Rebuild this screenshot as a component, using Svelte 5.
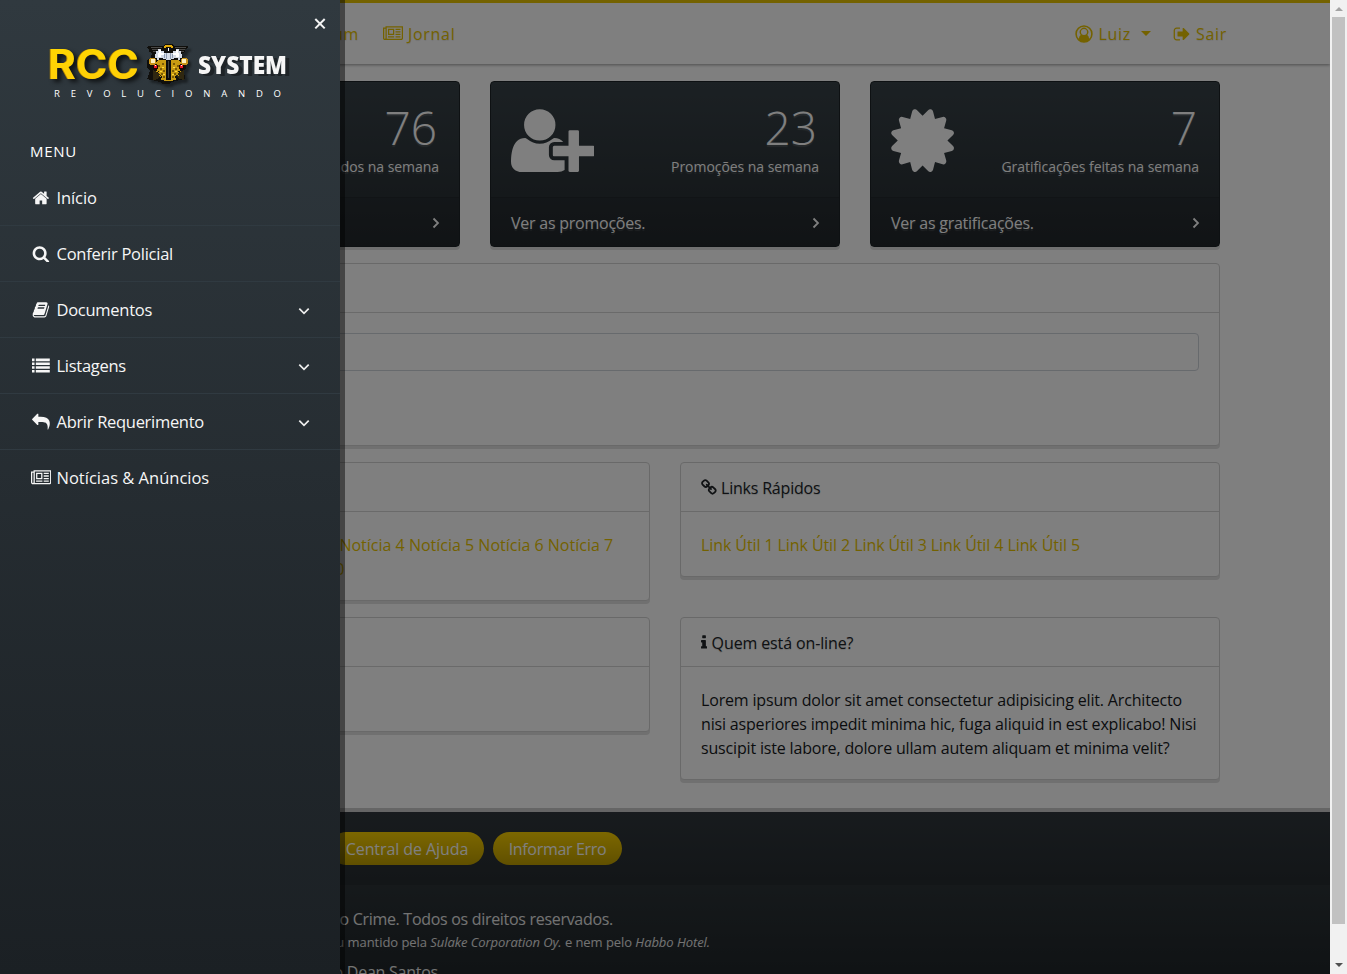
<script>
  const P = {
    home: 'M1472 992v480q0 26-19 45t-45 19h-384v-384h-256v384h-384q-26 0-45-19t-19-45v-480q0-1 .5-3t.5-3l575-474 575 474q1 2 1 6zm223-69l-62 74q-8 9-21 11h-3q-13 0-21-7l-692-577-692 577q-12 8-24 7-13-2-21-11l-62-74q-8-10-7-23.5t11-21.5l719-599q32-26 76-26t76 26l244 204v-195q0-14 9-23t23-9h192q14 0 23 9t9 23v408l219 182q10 8 11 21.5t-7 23.5z',
    search: 'M1216 832q0-185-131.5-316.5t-316.5-131.5-316.5 131.5-131.5 316.5 131.5 316.5 316.5 131.5 316.5-131.5 131.5-316.5zm512 832q0 52-38 90t-90 38q-54 0-90-38l-343-342q-179 124-399 124-143 0-273.5-55.5t-225-150-150-225-55.5-273.5 55.5-273.5 150-225 225-150 273.5-55.5 273.5 55.5 225 150 150 225 55.5 273.5q0 220-124 399l343 343q37 37 37 90z',
    book: 'M1703 478q40 57 18 129l-275 906q-19 64-76.5 107.5t-122.5 43.5h-923q-77 0-148.5-53.5t-99.5-131.5q-24-67-2-127 0-4 3-27t4-37q1-8-3-21.5t-3-19.5q2-11 8-21t16.5-23.5 16.5-23.5q23-38 45-91.5t30-91.5q3-10 .5-30t-.5-28q3-11 17-28t17-23q21-36 42-92t25-90q1-9-2.5-32t.5-28q4-13 22-30.5t22-22.5q19-26 42.5-84.5t27.5-96.5q1-8-3-25.5t-2-26.5q2-8 9-18t18-23 17-21q8-12 16.5-30.5t15-35 16-36 19.5-32 26.5-23.5 36-11.5 47.5 5.5l-1 3q38-9 51-9h761q74 0 114 56t18 130l-274 906q-36 119-71.5 153.5t-128.5 34.5h-869q-27 0-38 15-11 16-1 43 24 70 144 70h923q29 0 56-15.5t35-41.5l300-987q7-22 5-57 38 15 59 43zm-1064 2q-4 13 2 22.5t20 9.5h608q13 0 25.5-9.5t16.5-22.5l21-64q4-13-2-22.5t-20-9.5h-608q-13 0-25.5 9.5t-16.5 22.5zm-83 256q-4 13 2 22.5t20 9.5h608q13 0 25.5-9.5t16.5-22.5l21-64q4-13-2-22.5t-20-9.5h-608q-13 0-25.5 9.5t-16.5 22.5z',
    list: 'M0 160h256v256h-256zM384 160h1408v256h-1408zM0 544h256v256h-256zM384 544h1408v256h-1408zM0 928h256v256h-256zM384 928h1408v256h-1408zM0 1312h256v256h-256zM384 1312h1408v256h-1408z',
    reply: 'M0 640q0 26 19 45l512 512q19 19 45 19t45-19 19-45v-256h224q98 0 175.5 6t154 21.5 133 42.5 105.5 69.5 80 101 48.5 138.5 17.5 181q0 55-5 123 0 6-2.5 23.5t-2.5 26.5q0 15 8.5 25t23.5 10q16 0 28-17 7-9 13-22t13.5-30 10.5-24q127-285 127-451 0-199-53-333-162-403-875-403h-224v-256q0-26-19-45t-45-19-45 19l-512 512q-19 19-19 45z',
    news: 'M1024 512h-384v384h384v-384zm128 640v128h-640v-128h640zm0-768v640h-640v-640h640zm640 768v128h-512v-128h512zm0-256v128h-512v-128h512zm0-256v128h-512v-128h512zm0-256v128h-512v-128h512zm-1536 960v-960h-128v960q0 26 19 45t45 19 45-19 19-45zm1664 0v-1088h-1536v1088q0 33-11 64h1483q26 0 45-19t19-45zm128-1216v1216q0 80-56 136t-136 56h-1664q-80 0-136-56t-56-136v-1088h256v-128h1792z',
    out: 'M704 1440q0 4 1 20t.5 26.5-3 23.5-10 19.5-20.5 6.5h-320q-119 0-203.5-84.5t-84.5-203.5v-704q0-119 84.5-203.5t203.5-84.5h320q13 0 22.5 9.5t9.5 22.5q0 4 1 20t.5 26.5-3 23.5-10 19.5-20.5 6.5h-320q-66 0-113 47t-47 113v704q0 66 47 113t113 47h312l11.5 1 11.5 3 8 5.5 7 9 2 13.5zm928-544q0 26-19 45l-544 544q-19 19-45 19t-45-19-19-45v-288h-448q-26 0-45-19t-19-45v-384q0-26 19-45t45-19h448v-288q0-26 19-45t45-19 45 19l544 544q19 19 19 45z',
    seal: 'M1504 896l138 135q30 28 20 70-12 41-52 51l-188 48 53 186q12 41-19 70-29 31-70 19l-186-53-48 188q-10 40-51 52-12 2-19 2-31 0-51-22l-135-138-135 138q-28 30-70 20-41-11-51-52l-48-188-186 53q-41 12-70-19-31-29-19-70l53-186-188-48q-40-10-52-51-10-42 20-70l138-135-138-135q-30-28-20-70 12-41 52-51l188-48-53-186q-12-41 19-70 29-31 70-19l186 53 48-188q10-41 51-51 41-12 70 19l135 139 135-139q29-30 70-19 41 10 51 51l48 188 186-53q41-12 70 19 31 29 19 70l-53 186 188 48q40 10 52 51 10 42-20 70z',
    plus: 'M704 896q-159 0-271.5-112.5t-112.5-271.5 112.5-271.5 271.5-112.5 271.5 112.5 112.5 271.5-112.5 271.5-271.5 112.5zm960 128h352q13 0 22.5 9.5t9.5 22.5v192q0 13-9.5 22.5t-22.5 9.5h-352v352q0 13-9.5 22.5t-22.5 9.5h-192q-13 0-22.5-9.5t-9.5-22.5v-352h-352q-13 0-22.5-9.5t-9.5-22.5v-192q0-13 9.5-22.5t22.5-9.5h352v-352q0-13 9.5-22.5t22.5-9.5h192q13 0 22.5 9.5t9.5 22.5v352zm-736 224q0 52 38 90t90 38h256v238q-68 50-171 50h-874q-121 0-194-69t-73-190q0-53 3.5-103.5t14-109 26.5-108.5 43-97.5 62-81 85.5-53.5 111.5-20q19 0 39 17 79 61 154.5 91.5t164.5 30.5 164.5-30.5 154.5-91.5q20-17 39-17 132 0 217 96h-223q-52 0-90 38t-38 90v192z',
    link: 'M1456 1216q0-40-28-68l-208-208q-28-28-68-28-42 0-72 32 3 3 19 18.5t21.5 21.5 15 19 13 25.5 3.5 27.5q0 40-28 68t-68 28q-15 0-27.5-3.5t-25.5-13-19-15-21.5-21.5-18.5-19q-33 31-33 73 0 40 28 68l206 207q27 27 68 27 40 0 68-26l147-146q28-28 28-67zm-703-705q0-40-28-68l-206-207q-28-28-68-28-39 0-68 27l-147 146q-28 28-28 67 0 40 28 68l208 208q27 27 68 27 42 0 72-31-3-3-19-18.5t-21.5-21.5-15-19-13-25.5-3.5-27.5q0-40 28-68t68-28q15 0 27.5 3.5t25.5 13 19 15 21.5 21.5 18.5 19q33-31 33-73zm895 705q0 120-85 203l-147 146q-83 83-203 83-121 0-204-85l-206-207q-83-83-83-203 0-123 88-209l-88-88q-86 88-208 88-120 0-204-84l-208-208q-84-84-84-204t85-203l147-146q83-83 203-83 121 0 204 85l206 207q83 83 83 203 0 123-88 209l88 88q86-88 208-88 120 0 204 84l208 208q84 84 84 204z',
    info: 'M1216 1344v128q0 26-19 45t-45 19h-512q-26 0-45-19t-19-45v-128q0-26 19-45t45-19h64v-384h-64q-26 0-45-19t-19-45v-128q0-26 19-45t45-19h384q26 0 45 19t19 45v576h64q26 0 45 19t19 45zm-128-1152v192q0 26-19 45t-45 19h-256q-26 0-45-19t-19-45v-192q0-26 19-45t45-19h256q26 0 45 19t19 45z'
  };
  const menu = [
    { t: 'Início', i: 'home', s: -0.1 },
    { t: 'Conferir Policial', i: 'search', s: -0.25 },
    { t: 'Documentos', i: 'book', sub: true, s: -0.27 },
    { t: 'Listagens', i: 'list', sub: true, s: -0.27 },
    { t: 'Abrir Requerimento', i: 'reply', sub: true, s: -0.3 },
    { t: 'Notícias & Anúncios', i: 'news', s: 0 }
  ];
  const stats = [
    { n: '76', l: 'Alistados na semana', f: '', i: '' },
    { n: '23', l: 'Promoções na semana', f: 'Ver as promoções.', i: 'plus' },
    { n: '7', l: 'Gratificações feitas na semana', f: 'Ver as gratificações.', i: 'seal' }
  ];
  const news = Array.from({ length: 10 }, (_, k) => `Notícia ${k + 1}`);
  const links = Array.from({ length: 5 }, (_, k) => `Link Útil ${k + 1}`);
</script>

{#snippet icon(name, size, wide = false)}
  <svg class="ic" viewBox={wide ? '0 0 2048 1792' : name === 'info' ? '576 0 640 1792' : '0 0 1792 1792'} height={size} width={wide ? size * 8 / 7 : name === 'info' ? size * 0.36 : size}><path d={P[name]} fill="currentColor" /></svg>
{/snippet}

<div class="screen">
  <div class="page">
    <header>
      <nav class="left">
        <a class="forum">Fórum</a>
        <a class="jornal">{@render icon('news', 17.5, true)}<span>Jornal</span></a>
      </nav>
      <nav class="right">
        <a class="luiz">
          <svg class="ic" width="18" height="18" viewBox="0 0 18 18"><path fill-rule="evenodd" d="M9 .3a8.700 8.700 0 1 0 0 17.400a8.700 8.700 0 1 0 0-17.400zM3.800 13.700A7.100 7.100 0 1 1 14.200 13.700Q13.700 10.600 12.300 9.900A4.300 4.300 0 1 0 5.700 9.900Q4.300 10.600 3.800 13.700zM9 4.100a3 3 0 1 0 0 6a3 3 0 1 0 0-6z" fill="currentColor" /></svg>
          <span>Luiz</span><i class="caret"></i>
        </a>
        <a class="sair">{@render icon('out', 18)}<span>Sair</span></a>
      </nav>
    </header>

    <main>
      <section class="stats">
        {#each stats as s}
          <article class="stat">
            <div class="stat-top">
              <div class="big" class:seal={s.i === 'seal'}>{#if s.i}{@render icon(s.i, 73.200, s.i === 'plus')}{/if}</div>
              <div class="nums"><div class="num">{s.n}</div><div class="lab">{s.l}</div></div>
            </div>
            <div class="stat-foot"><span>{s.f}</span>
              <svg width="8" height="12" viewBox="0 0 8 12"><path d="M1.500 1.500L6 6L1.500 10.500" fill="none" stroke="currentColor" stroke-width="1.800" /></svg>
            </div>
          </article>
        {/each}
      </section>

      <section class="card wide"><div class="head"></div><div class="body form"><div class="field"></div></div></section>

      <section class="grid">
        <div class="card c1"><div class="head"></div><div class="body lnk">{#each news as n}<a>{n}</a>{' '}{/each}</div></div>
        <div class="card c2"><div class="head">{@render icon('link', 17)}<span>Links Rápidos</span></div><div class="body lnk links">{#each links as n}<a>{n}</a>{' '}{/each}</div></div>
        <div class="card c3"><div class="head"></div><div class="body"></div></div>
        <div class="card c4"><div class="head quem">{@render icon('info', 17)}<span>Quem está on-line?</span></div>
          <div class="body lorem">Lorem ipsum dolor sit amet consectetur adipisicing elit. Architecto<br />nisi asperiores impedit minima hic, fuga aliquid in est explicabo! Nisi<br />suscipit iste labore, dolore ullam autem aliquam et minima velit?</div></div>
      </section>
    </main>

    <footer>
      <div class="btns"><span class="btn b1">Central de Ajuda</span><span class="btn b2">Informar Erro</span></div>
      <div class="legal">
        <p class="l1">o Crime. Todos os direitos reservados.</p>
        <p class="l2">ou mantido pela <em>Sulake Corporation Oy.</em> e nem pelo <em>Habbo Hotel.</em></p>
        <p class="l3">o Dean Santos</p>
      </div>
    </footer>
    <div class="dim"></div>
  </div>

  <div class="scroll"><i class="up"></i><div class="thumb"></div><i class="down"></i></div>

  <aside>
    <div class="close"><svg width="12" height="12" viewBox="0 0 12 12"><path d="M1.300 1L10.700 10.400M10.700 1L1.300 10.400" stroke="#f4f4f4" stroke-width="2" /></svg></div>
    <svg class="logo" width="250" height="62" viewBox="45 40 250 62">
      <defs><linearGradient id="gold" x1="0" y1="0" x2="0" y2="1"><stop offset="0" stop-color="#ffd800" /><stop offset="1" stop-color="#ffcc08" /></linearGradient></defs>
      <g class="rcc">
        <text x="47" y="79" textLength="91" lengthAdjust="spacingAndGlyphs" fill="#b98a00">RCC</text>
        <text x="48" y="79" textLength="91" lengthAdjust="spacingAndGlyphs" fill="url(#gold)">RCC</text>
      </g>
      <g class="emblem" transform="translate(145 40)" shape-rendering="crispEdges">
        <path d="M4 6h14l2-2h7l2 2h14v2l-3 1v3l-3 1 1 5 3 2v8l-2 3 1 8-9 2-4 1-3 2h-6l-3-2-4-1-9-2 3-8-3-3v-8l4-2 1-5-3-1v-3l-3-1z" fill="#100f0c" />
        <path d="M6 7h11v1h-11zM7 9h7v1h-7zM8 11h4v1h-4zM30 7h11v1h-11zM33 9h7v1h-7zM35 11h4v1h-4z" fill="#4a4947" />
        <path d="M20 5h7v1h1v2h-2v-1h-5v1h-2v-2h1z" fill="#e0a90c" />
        <path d="M13 20h21l2 3-2 4 2 5-3-1 3 7-6-2 1 4-6 1h-3l-6-1 1-4-6 2 3-7-3 1 2-5-2-4z" fill="#c99b12" />
        <path d="M13 25h2v2h-2zM17 23h2v2h-2zM15 28h2v2h-2zM18 30h2v2h-2zM16 33h2v2h-2zM18 36h2v2h-2zM32 25h2v2h-2zM28 23h2v2h-2zM30 28h2v2h-2zM27 30h2v2h-2zM29 33h2v2h-2zM27 36h2v2h-2z" fill="#7b5a06" />
        <path d="M17 27h2v1h-2zM15 31h2v1h-2zM18 34h2v1h-2zM28 27h2v1h-2zM30 31h2v1h-2zM27 34h2v1h-2z" fill="#ffd93a" />
        <path d="M8 30l7 4-2 2 3-1-3 4-5 1zM39 30l-7 4 2 2-3-1 3 4 5 1z" fill="#2f2710" />
        <path d="M13 9h3v2h3v2h9v-2h3v-2h3v2h2v3h1v4h-2v2h-2v-2h-4v1h-3v2h-5v-2h-3v-1h-4v2h-2v-2h-2v-4h1v-3h2z" fill="#d5dbe6" />
        <path d="M14 10h2v3h3v2h-3v2h-3v-4h1zM31 10h2v3h1v4h-3v-2h-3v-2h3z" fill="#fff" />
        <path d="M19 14h1v4h-1zM27 14h1v4h-1zM21 13h1v6h-1zM25 13h1v6h-1z" fill="#8f9db4" />
        <path d="M21 20h5v20h-5z" fill="#0c0c0d" /><path d="M23 21h1v17h-1z" fill="#3c3c3d" />
        <path d="M21 8h5v4h-5z" fill="#111" /><path d="M23 8h1v3h-1z" fill="#fff" />
        <path d="M5 18h5v1h1v5h-1v1h-5v-1h-1v-5h1zM37 18h5v1h1v5h-1v1h-5v-1h-1v-5h1z" fill="#c9941a" />
        <path d="M6 19h4v4h-4zM37 19h4v4h-4z" fill="#fff0bd" />
        <path d="M8 25h5v4h-5zM34 25h5v4h-5z" fill="#200" /><path d="M9 25h3v3h-3zM35 25h3v3h-3z" fill="#e81c27" /><path d="M10 25h1v1h-1zM36 25h1v1h-1z" fill="#fff" />
      </g>
      <g class="system"><text x="198" y="74" textLength="89" lengthAdjust="spacingAndGlyphs" fill="#f6f6f6">SYSTEM</text></g>
      <text class="rev" x="54" y="97" textLength="227">REVOLUCIONANDO</text>
    </svg>
    <h2>MENU</h2>
    <ul>
      {#each menu as m}
        <li><span class="mi">{@render icon(m.i, 17.800, m.i === 'news')}</span><span class="mt" style:letter-spacing="{m.s}px">{m.t}</span>
          {#if m.sub}<svg class="chev" width="12" height="8" viewBox="0 0 12 8"><path d="M1.300 1.600L6 6.300L10.700 1.600" fill="none" stroke="#eee" stroke-width="1.700" /></svg>{/if}
        </li>
      {/each}
    </ul>
  </aside>
</div>

<style>
  :global(body) { margin: 0; overflow: hidden; }
  * { box-sizing: border-box; }
  .screen { position: relative; display: flex; width: 1347px; height: 974px; overflow: hidden; font: 16px/24px "Open Sans", "Noto Sans", sans-serif; color: #212529; background: #fff; }
  .page { position: relative; width: 1330px; height: 974px; overflow: hidden; display: flex; flex-direction: column; background: #fff; }
  .dim { position: absolute; inset: 0; background: rgba(0, 0, 0, .5); }
  .ic { flex: none; display: block; }
  header { height: 64px; flex: none; border-top: 3px solid #e9c400; box-shadow: 0 1px 3px rgba(0, 0, 0, .4); display: flex; justify-content: space-between; padding: 0 103px 0 300px; color: #e9c400; letter-spacing: .7px; text-shadow: 0 1px 1px rgba(0, 0, 0, .1); }
  nav { display: flex; align-items: center; }
  nav a { display: flex; align-items: center; }
  .forum { width: 59px; justify-content: flex-end; }
  .jornal { margin-left: 24px; }
  .jornal span, .luiz span, .sair span { margin-left: 5px; }
  .sair { margin-left: 22px; }
  .caret { border: 5px solid transparent; border-top-color: currentColor; border-bottom: 0; margin-left: 10px; }
  main { padding: 17px 110px 0; height: 744px; flex: none; }
  .stats { display: grid; grid-template-columns: repeat(3, 350px); gap: 30px; }
  .stat { height: 166px; border: 1px solid #1d2327; border-radius: 4px; background: linear-gradient(#384248, #252b2f); color: #fff; box-shadow: 0 3px 0 rgba(0, 0, 0, .12); text-shadow: 0 2px 1px rgba(255, 255, 255, .13); }
  .stat-top { height: 116px; display: flex; justify-content: space-between; padding: 21px 20px 0; border-bottom: 1px solid #22282c; }
  .big { margin: 1px 0 0 -.5px; }
  .seal { margin-left: -5.500px; }
  .nums { text-align: right; }
  .num { font-weight: 300; font-size: 46px; line-height: 50px; margin-top: -1px; padding-right: 2px; }
  .lab { font-size: 14px; line-height: 29px; white-space: nowrap; letter-spacing: -.05px; }
  .stat-foot { height: 48px; padding: 2px 19px 0 20px; background: rgba(0, 0, 0, .07); display: flex; justify-content: space-between; align-items: center; letter-spacing: -.24px; }
  .card { border: 1px solid #d2d2d2; border-radius: 4px; box-shadow: 0 3px 0 rgba(0, 0, 0, .12); background: #fff; }
  .wide { height: 183px; margin-top: 16px; }
  .head { height: 49px; border-bottom: 1px solid #d5d5d5; display: flex; align-items: center; padding: 1px 20px 0; gap: 3px; text-shadow: 0 1px 1px rgba(0, 0, 0, .15); letter-spacing: -.2px; }
  .quem { letter-spacing: -.12px; gap: 4.500px; }
  .body { padding: 21px 20px 20px; }
  .form { padding-top: 20px; }
  .field { height: 38px; border: 1px solid #ced4da; border-radius: 4px; }
  .grid { display: grid; grid-template-columns: 540px 540px; column-gap: 30px; row-gap: 16px; align-items: start; margin-top: 16px; }
  .c1 { height: 139px; }
  .c2 { height: 115px; }
  .c3 { height: 115px; }
  .c4 { height: 163px; }
  .lnk { color: #e9c400; }
  .links { letter-spacing: -.09px; }
  .lorem { white-space: nowrap; letter-spacing: -.17px; color: #16191c; }
  footer { flex: none; border-top: 4px solid #cacaca; color: #fff; }
  .btns { height: 73px; background: linear-gradient(#30373c, #262c30); padding: 20px 0 0 330px; display: flex; gap: 9px; }
  .btn { height: 33px; border-radius: 17px; background: linear-gradient(#f9cf00, #c09f00); display: flex; align-items: center; justify-content: center; white-space: nowrap; }
  .b1 { width: 154px; letter-spacing: -.08px; }
  .b2 { width: 129px; letter-spacing: -.32px; }
  .legal { height: 120px; background: linear-gradient(#2c3337, #20262a 89px); padding-top: 22px; }
  .legal p { margin: 0; white-space: nowrap; text-align: right; color: #e6e6e6; }
  .l1 { width: 613px; letter-spacing: -.3px; }
  .legal .l2 { width: 710px; font-size: 13px; letter-spacing: -.06px; line-height: 22px; }
  .l3 { width: 438px; padding-top: 7px; letter-spacing: -.25px; }
  .scroll { width: 17px; height: 974px; background: #f1f1f1; display: flex; flex-direction: column; align-items: center; }
  .thumb { width: 13px; height: 907px; background: #c1c1c1; margin-top: 6px; }
  .up, .down { border: 4px solid transparent; }
  .up { border-top: 0; border-bottom-color: #a3a3a3; margin-top: 7px; }
  .down { border-bottom: 0; border-top-color: #505050; margin-top: 39px; }
  aside { position: absolute; left: 0; top: 0; width: 340px; height: 974px; background: linear-gradient(#30393f, #1b2024); box-shadow: 5px 0 0 rgba(0, 0, 0, .45); color: #fff; display: flex; flex-direction: column; }
  .close { height: 40px; padding: 18px 14px 0; display: flex; justify-content: flex-end; flex: none; }
  .logo { margin-left: 45px; display: block; flex: none; }
  .rcc text { font: 700 41px Inter, sans-serif; }
  .rcc { filter: drop-shadow(4px 3px 2px rgba(0, 0, 0, .65)); }
  .emblem { filter: drop-shadow(3px 3px 1px rgba(0, 0, 0, .4)); }
  .system text { font: 800 25px "Open Sans", sans-serif; }
  .system { filter: drop-shadow(4px 2px 0 rgba(0, 0, 0, .35)); }
  .rev { font-size: 9.500px; fill: #fff; }
  h2 { font-size: 15px; font-weight: 400; line-height: 24px; letter-spacing: .7px; margin: 37px 0 0 30px; }
  ul { margin: 7px 0 0; padding: 0; list-style: none; }
  li { height: 56px; border-bottom: 1px solid #303a41; display: flex; align-items: center; padding: 0 30px 0 31px; font-size: 16.500px; color: #f6f6f6; }
  li:last-child { border: 0; }
  .mi { width: 20px; margin-right: 5.500px; display: flex; justify-content: center; }
  .mt { flex: 1; }
  .chev { margin-top: 2px; }
</style>
